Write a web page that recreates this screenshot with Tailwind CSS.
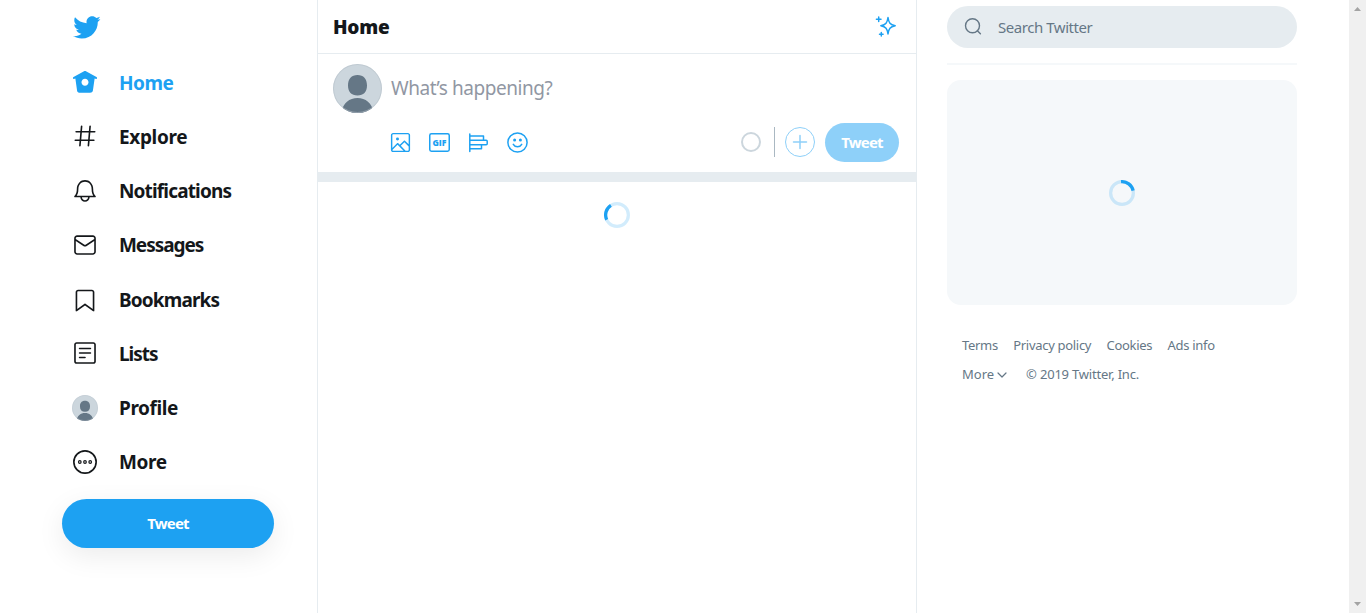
<!DOCTYPE html>
<html lang="en">
<head>
<meta charset="utf-8">
<title>Home / Twitter</title>
<script src="https://cdn.jsdelivr.net/npm/@tailwindcss/browser@4"></script>
</head>
<body class="flex h-[613px] w-[1366px] overflow-hidden bg-white font-['Noto_Sans','Open_Sans',sans-serif] text-[#14171a]">
<svg class="hidden">
  <symbol id="avatar" viewBox="0 0 49 49">
    <rect width="49" height="49" fill="#ccd6dd"/>
    <path d="M24.500 11c6 0 9.500 4 9.500 10.500C34 28 30.500 31.500 24.500 31.500S15 28 15 21.500C15 15 18.500 11 24.500 11zM24.500 34C32.500 34 39 39 41 49H8c2-10 8.500-15 16.500-15z" fill="#657786"/>
    <circle cx="24.500" cy="24.500" r="24" fill="none" stroke="#b5c0c8" stroke-opacity=".6"/>
  </symbol>
</svg>

<header class="flex h-full w-[318px] shrink-0 flex-col border-r border-[#e6ecf0] pl-[62px]">
  <div class="flex h-[55px] items-center pb-[1px] pl-[10px]">
    <svg class="h-[29px] w-[29px] fill-[#1da1f2]" viewBox="0 0 24 24"><path d="M23.643 4.937c-.835.37-1.732.62-2.675.733.962-.576 1.700-1.490 2.048-2.578-.9.534-1.897.922-2.958 1.130-.85-.904-2.060-1.470-3.400-1.470-2.572 0-4.658 2.086-4.658 4.660 0 .364.042.718.120 1.060-3.873-.195-7.304-2.050-9.602-4.868-.4.690-.63 1.490-.63 2.342 0 1.616.823 3.043 2.072 3.878-.764-.025-1.482-.234-2.110-.583v.060c0 2.257 1.605 4.140 3.737 4.568-.392.106-.803.162-1.227.162-.3 0-.593-.028-.877-.082.593 1.850 2.313 3.198 4.352 3.234-1.595 1.250-3.604 1.995-5.786 1.995-.376 0-.747-.022-1.112-.065 2.062 1.323 4.510 2.093 7.140 2.093 8.570 0 13.255-7.098 13.255-13.254 0-.2-.005-.402-.014-.602.910-.658 1.700-1.477 2.323-2.410z"/></svg>
  </div>
  <nav class="flex flex-col text-[19px] font-bold leading-none">
    <a class="flex h-[54.25px] items-center gap-[21px] pl-[10px] text-[#1da1f2]">
      <svg class="h-[26px] w-[26px] fill-current" viewBox="0 0 24 24"><path d="M22.580 7.350L12.475 1.897c-.297-.16-.654-.16-.95 0L1.425 7.350c-.486.264-.667.870-.405 1.356.180.335.525.525.880.525.160 0 .324-.038.475-.12l.734-.396 1.590 11.250c.216 1.214 1.310 2.062 2.660 2.062h9.282c1.350 0 2.444-.848 2.662-2.088l1.588-11.225.737.398c.485.263 1.092.082 1.354-.404.263-.486.080-1.093-.404-1.355zM12 15.435c-1.795 0-3.250-1.455-3.250-3.250s1.455-3.250 3.250-3.250 3.250 1.455 3.250 3.250-1.455 3.250-3.250 3.250z"/></svg>
      <span class="pt-[2px] tracking-[-0.5px]">Home</span></a>
    <a class="flex h-[54.25px] items-center gap-[21px] pl-[10px]">
      <svg class="h-[26px] w-[26px] fill-current" viewBox="0 0 24 24"><path d="M21 7.337h-3.930l.372-4.272c.036-.412-.27-.775-.682-.812-.417-.03-.776.270-.812.683l-.383 4.400h-6.320l.370-4.270c.037-.413-.27-.776-.68-.813-.42-.03-.777.270-.813.683l-.382 4.400H3.782c-.414 0-.75.337-.75.750s.336.750.750.750H7.610l-.55 6.327H3c-.414 0-.75.336-.75.750s.336.750.750.750h3.930l-.372 4.272c-.036.412.270.775.682.812l.066.003c.385 0 .712-.295.746-.686l.383-4.400h6.320l-.37 4.270c-.036.413.270.776.682.813l.066.003c.385 0 .712-.295.746-.686l.382-4.400h3.957c.413 0 .750-.337.750-.75s-.337-.75-.75-.75H16.390l.550-6.327H21c.414 0 .750-.336.750-.75s-.336-.75-.75-.75zm-6.115 7.826h-6.320l.550-6.326h6.320l-.55 6.326z"/></svg>
      <span class="pt-[2px] tracking-[-0.35px]">Explore</span></a>
    <a class="flex h-[54.25px] items-center gap-[21px] pl-[10px]">
      <svg class="h-[26px] w-[26px] fill-current" viewBox="0 0 24 24"><path d="M21.697 16.468c-.02-.016-2.140-1.640-2.103-6.030.020-2.532-.812-4.782-2.347-6.335C15.872 2.710 14.010 1.940 12.005 1.930h-.013c-2.004.010-3.866.780-5.242 2.174-1.534 1.553-2.368 3.802-2.346 6.334.037 4.330-2.020 5.967-2.102 6.030-.26.193-.366.530-.265.838.102.308.390.515.712.515h4.920c.102 2.310 1.997 4.160 4.330 4.160s4.226-1.850 4.327-4.160h4.922c.322 0 .610-.206.710-.514.103-.307-.003-.645-.263-.838zM12 20.478c-1.505 0-2.730-1.177-2.828-2.658h5.656c-.1 1.480-1.323 2.660-2.828 2.660zM4.380 16.320c.740-1.132 1.548-3.028 1.524-5.896-.018-2.160.644-3.982 1.913-5.267C8.910 4.050 10.397 3.437 12 3.430c1.603.008 3.087.620 4.180 1.728 1.270 1.285 1.933 3.106 1.915 5.267-.024 2.868.785 4.765 1.525 5.896H4.380z"/></svg>
      <span class="pt-[2px] tracking-[-0.85px]">Notifications</span></a>
    <a class="flex h-[54.25px] items-center gap-[21px] pl-[10px]">
      <svg class="h-[26px] w-[26px] fill-current" viewBox="0 0 24 24"><path d="M19.250 3.018H4.750C3.233 3.018 2 4.252 2 5.770v12.495c0 1.518 1.233 2.753 2.750 2.753h14.500c1.517 0 2.750-1.235 2.750-2.753V5.770c0-1.518-1.233-2.752-2.750-2.752zm-14.500 1.500h14.500c.690 0 1.250.560 1.250 1.250v.714l-8.050 5.367c-.273.180-.626.182-.9-.002L3.500 6.482v-.714c0-.69.560-1.250 1.250-1.250zm14.500 14.998H4.750c-.69 0-1.250-.56-1.250-1.250V8.240l7.240 4.830c.383.256.822.384 1.260.384.440 0 .877-.128 1.260-.383l7.240-4.830v10.022c0 .690-.56 1.250-1.250 1.250z"/></svg>
      <span class="pt-[2px] tracking-[-1.05px]">Messages</span></a>
    <a class="flex h-[54.25px] items-center gap-[21px] pl-[10px]">
      <svg class="h-[26px] w-[26px] fill-current" viewBox="0 0 24 24"><path d="M19.900 23.500c-.157 0-.312-.05-.442-.144L12 17.928l-7.458 5.430c-.228.164-.53.190-.782.060-.25-.127-.41-.385-.41-.667V5.600c0-1.240 1.010-2.250 2.250-2.250h12.798c1.240 0 2.250 1.010 2.250 2.250v17.150c0 .282-.158.540-.41.668-.106.055-.223.082-.34.082zM12 16.250c.155 0 .310.048.440.144l6.710 4.883V5.600c0-.412-.337-.75-.75-.75H5.600c-.413 0-.75.338-.75.750v15.677l6.710-4.883c.130-.096.285-.144.440-.144z"/></svg>
      <span class="pt-[2px] tracking-[-0.85px]">Bookmarks</span></a>
    <a class="flex h-[54.25px] items-center gap-[21px] pl-[10px]">
      <svg class="h-[26px] w-[26px] fill-current" viewBox="0 0 24 24"><path d="M19.750 22H4.250C3.010 22 2 20.990 2 19.750V4.250C2 3.010 3.010 2 4.250 2h15.500C20.990 2 22 3.010 22 4.250v15.500c0 1.240-1.010 2.250-2.250 2.250zM4.250 3.500c-.414 0-.75.337-.75.750v15.500c0 .413.336.750.750.750h15.500c.414 0 .750-.337.750-.75V4.250c0-.413-.336-.75-.75-.75H4.250z"/><path d="M7 7.890h10M7 12h10M7 16.110h5" fill="none" stroke="currentColor" stroke-width="1.5" stroke-linecap="round"/></svg>
      <span class="pt-[2px] tracking-[-1.05px]">Lists</span></a>
    <a class="flex h-[54.25px] items-center gap-[21px] pl-[10px]">
      <svg class="h-[26px] w-[26px] rounded-full"><use href="#avatar"/></svg>
      <span class="pt-[2px] tracking-[-0.4px]">Profile</span></a>
    <a class="flex h-[54.25px] items-center gap-[21px] pl-[10px]">
      <svg class="h-[26px] w-[26px] fill-none stroke-current" viewBox="0 0 24 24"><circle cx="12" cy="12" r="10.300" stroke-width="1.500"/><g stroke-width="1.100"><circle cx="7.200" cy="12" r="1.200"/><circle cx="12" cy="12" r="1.200"/><circle cx="16.800" cy="12" r="1.200"/></g></svg>
      <span class="pt-[2px] tracking-[-0.35px]">More</span></a>
  </nav>
  <button class="mt-[10px] flex h-[49px] w-[212px] items-center justify-center rounded-full bg-[#1da1f2] text-[15px] font-bold leading-none tracking-[-0.8px] text-white shadow-[0_8px_28px_rgba(0,0,0,0.08)]">Tweet</button>
</header>

<main class="flex h-full w-[599px] shrink-0 flex-col border-r border-[#e6ecf0]">
  <div class="flex h-[54px] items-center justify-between border-b border-[#e6ecf0] pl-[15px] pr-[19px]">
    <h1 class="pt-[2px] font-['Open_Sans','Noto_Sans',sans-serif] text-[19px] font-extrabold leading-none tracking-[-0.2px]">Home</h1>
    <svg class="h-[23px] w-[23px] fill-none stroke-[#1da1f2]" viewBox="0 0 23 23" stroke-width="1.500" stroke-linejoin="round" stroke-linecap="round"><path d="M14 2.500C14.800 7.800 16 9.700 21.200 10.700C16 11.700 14.800 13.600 14 18.900C13.200 13.600 12 11.700 6.800 10.700C12 9.700 13.200 7.800 14 2.500zM4.700 2v4.600M2.400 4.300h4.600M7.300 17.500v3.600M5.500 19.300h3.600"/></svg>
  </div>
  <section class="flex h-[118px] gap-[9px] pl-[15px] pr-[17px] pt-[10px]">
    <svg class="h-[49px] w-[49px] shrink-0 rounded-full"><use href="#avatar"/></svg>
    <div class="flex grow flex-col">
      <div class="flex h-[49px] items-center text-[19px] leading-none tracking-[-0.45px] text-[#9197a3]"><span>What’s happening?</span></div>
      <div class="mt-[10px] flex h-[39px] items-center justify-between">
        <div class="-ml-[2.500px] flex gap-[16px] text-[#1da1f2]">
          <svg class="h-[23px] w-[23px] fill-current" viewBox="0 0 24 24"><path d="M19.750 2H4.250C3.010 2 2 3.010 2 4.250v15.500C2 20.990 3.010 22 4.250 22h15.500c1.240 0 2.250-1.010 2.250-2.250V4.250C22 3.010 20.990 2 19.750 2zM4.250 3.500h15.500c.413 0 .750.337.750.750v9.676l-3.858-3.858c-.14-.14-.33-.22-.53-.22h-.003c-.2 0-.393.080-.532.224l-4.317 4.384-1.813-1.806c-.14-.14-.33-.22-.53-.22-.193-.03-.395.080-.535.227L3.500 17.642V4.250c0-.413.337-.75.750-.75zm-.744 16.280l5.418-5.534 6.282 6.254H4.250c-.402 0-.727-.322-.744-.72zm16.244.720h-2.420l-5.007-4.987 3.792-3.850 4.385 4.384v3.703c0 .413-.337.750-.75.750z"/><circle cx="8.868" cy="8.309" r="1.542"/></svg>
          <svg class="h-[23px] w-[23px]" viewBox="0 0 23 23"><rect x="1.750" y="2.750" width="19.500" height="17.500" rx="1.700" fill="none" stroke="currentColor" stroke-width="1.500"/><text x="11.500" y="14.800" text-anchor="middle" textLength="14" lengthAdjust="spacingAndGlyphs" fill="currentColor" class="font-['Open_Sans',sans-serif] text-[9px] font-extrabold">GIF</text></svg>
          <svg class="h-[23px] w-[23px] fill-none stroke-current" viewBox="0 0 23 23" stroke-width="1.500" stroke-linejoin="round" stroke-linecap="round"><path d="M2.800 3v17.500M2.800 5h13.700v4.300M2.800 9.300h16.400a1 1 0 0 1 1 1v2.400a1 1 0 0 1-1 1H2.800M14.500 13.700v4.100H2.800"/></svg>
          <svg class="h-[23px] w-[23px]" viewBox="0 0 23 23"><circle cx="11.500" cy="11.500" r="9.600" fill="none" stroke="currentColor" stroke-width="1.500"/><g fill="currentColor"><circle cx="8.600" cy="9" r="1.500"/><circle cx="14.400" cy="9" r="1.500"/></g><path d="M7.300 13.400c1.800 3.200 6.600 3.200 8.400 0" fill="none" stroke="currentColor" stroke-width="1.500" stroke-linecap="round"/></svg>
        </div>
        <div class="flex items-center">
          <div class="mb-[2px] h-5 w-5 rounded-full border-2 border-[#ccd6dd]"></div>
          <div class="mb-[2px] ml-[13px] h-[30px] w-px bg-[#aab8c2]"></div>
          <div class="mb-[2px] ml-[10px] flex h-[30px] w-[30px] items-center justify-center rounded-full border border-[#8ed0f9]"><svg class="h-[16px] w-[16px] stroke-[#8ed0f9]" viewBox="0 0 16 16" stroke-width="1.500" stroke-linecap="round"><path d="M8 1.500v13M1.500 8h13"/></svg></div>
          <button class="ml-[10px] flex h-[39px] w-[74px] items-center justify-center rounded-full bg-[#8ed0f9] text-[15px] font-bold leading-none tracking-[-0.8px] text-white">Tweet</button>
        </div>
      </div>
    </div>
  </section>
  <div class="h-[10px] bg-[#e6ecf0]"></div>
  <div class="flex justify-center pt-[20px]">
    <svg class="h-[26px] w-[26px] fill-none stroke-[#1da1f2]" viewBox="0 0 32 32" stroke-width="4"><circle cx="16" cy="16" r="14" opacity=".2"/><circle cx="16" cy="16" r="14" stroke-dasharray="20 68" transform="rotate(155 16 16)"/></svg>
  </div>
</main>

<aside class="ml-[30px] flex w-[350px] shrink-0 flex-col pt-[6px] text-[#657786]">
  <div class="flex h-[42px] items-center rounded-full bg-[#e6ecf0] pl-[16px] text-[15px] leading-none">
    <svg class="h-[20px] w-[20px] fill-none stroke-[#657786]" viewBox="0 0 20 20" stroke-width="1.400" stroke-linecap="round"><circle cx="9.500" cy="8.700" r="7"/><path d="M14.400 13.700l3 3"/></svg>
    <span class="ml-[15px] pt-[1px] tracking-[-0.45px]">Search Twitter</span>
  </div>
  <div class="mt-[15px] h-[2px] bg-[#f5f8fa]"></div>
  <div class="mt-[15px] flex h-[225px] items-center justify-center rounded-[14px] bg-[#f5f8fa]">
    <svg class="h-[26px] w-[26px] fill-none stroke-[#1da1f2]" viewBox="0 0 32 32" stroke-width="4"><circle cx="16" cy="16" r="14" opacity=".2"/><circle cx="16" cy="16" r="14" stroke-dasharray="20 68" transform="rotate(-95 16 16)"/></svg>
  </div>
  <div class="mt-[30px] flex flex-col pl-[15px] text-[13px] leading-none tracking-[-0.3px]">
    <div class="flex h-[20px] items-center gap-[15.300px]"><span>Terms</span><span>Privacy policy</span><span>Cookies</span><span>Ads info</span></div>
    <div class="mt-[9px] flex h-[20px] items-center"><span class="tracking-normal">More</span>
      <svg class="ml-[3px] mt-[2px] h-[10px] w-[10px] fill-none stroke-current" viewBox="0 0 10 10" stroke-width="1.200" stroke-linecap="round" stroke-linejoin="round"><path d="M1 3l4 4 4-4"/></svg>
      <span class="ml-[19px] tracking-[-0.2px]">© 2019 Twitter, Inc.</span></div>
  </div>
</aside>

<div class="ml-auto flex w-[17px] flex-col items-center justify-between bg-[#f0f0f0] py-[7px]">
  <svg class="h-[4px] w-[7px] fill-[#a3a3a3]" viewBox="0 0 7 4"><path d="M0 4L3.500 0L7 4z"/></svg>
  <svg class="h-[4px] w-[7px] fill-[#a3a3a3]" viewBox="0 0 7 4"><path d="M0 0L3.500 4L7 0z"/></svg>
</div>
</body>
</html>
